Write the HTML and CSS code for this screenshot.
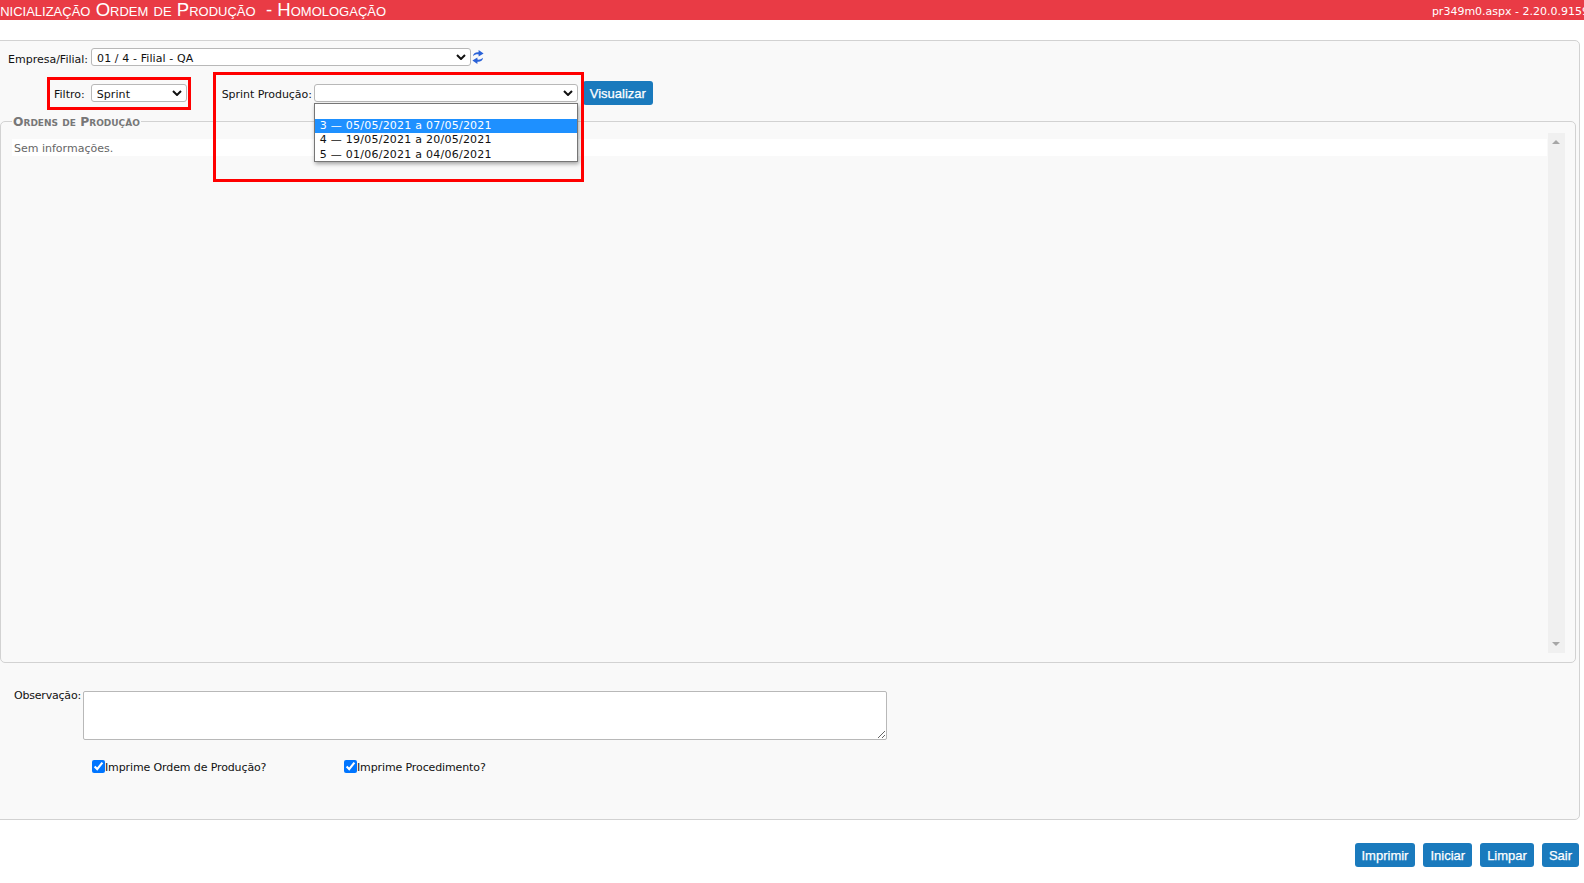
FILE: index.html
```html
<!DOCTYPE html>
<html lang="pt-BR">
<head>
    <meta charset="UTF-8">
    <title>Inicialização Ordem de Produção</title>
    <link rel="stylesheet" href="styles.css">
</head>
<body>
    <div class="top-bar">
        <span class="page-title">Inicialização Ordem de Produção &nbsp;- Homologação</span>
        <span class="page-version">pr349m0.aspx - 2.20.0.9159</span>
    </div>

    <div class="main-panel">
        <div class="row-company">
            <label class="field-label">Empresa/Filial:</label>
            <select class="select-company">
                <option>01 / 4 - Filial - QA</option>
            </select>
            <svg class="refresh-icon" viewBox="0 0 12 16" width="12" height="16">
                <path d="M1 7.2C1.2 4.4 3.4 3 6.6 3.2V1L11.6 4.4 6.6 7.6V5.4C4.4 5.2 2.6 5.6 1 7.2Z" fill="#2a62d8"/>
                <path d="M11 8.8C10.8 11.6 8.6 13 5.4 12.8V15L.4 11.6 5.4 8.4V10.6C7.6 10.8 9.4 10.4 11 8.8Z" fill="#2a62d8"/>
            </svg>
        </div>

        <div class="row-filter">
            <div class="filter-group">
                <label class="field-label">Filtro:</label>
                <select class="select-filter">
                    <option>Sprint</option>
                </select>
            </div>
            <div class="sprint-group">
                <label class="field-label">Sprint Produção:</label>
                <div class="sprint-wrap">
                    <select class="select-sprint">
                        <option></option>
                    </select>
                    <ul class="sprint-menu">
                        <li>&nbsp;</li>
                        <li class="active">3 — 05/05/2021 a 07/05/2021</li>
                        <li>4 — 19/05/2021 a 20/05/2021</li>
                        <li>5 — 01/06/2021 a 04/06/2021</li>
                    </ul>
                </div>
                <button class="btn btn-view">Visualizar</button>
            </div>
        </div>

        <div class="mark mark-filter"></div>
        <div class="mark mark-sprint"></div>

        <fieldset class="orders">
            <legend>Ordens de Produção</legend>
            <div class="orders-body">
                <div class="orders-list">
                    <div class="orders-empty">Sem informações.</div>
                </div>
                <div class="scroll-track">
                    <span class="arrow-up"></span>
                    <span class="arrow-down"></span>
                </div>
            </div>
        </fieldset>

        <div class="row-notes">
            <label class="field-label">Observação:</label>
            <textarea class="notes"></textarea>
        </div>

        <div class="row-checks">
            <label class="check check-first"><input type="checkbox" checked>Imprime Ordem de Produção?</label>
            <label class="check"><input type="checkbox" checked>Imprime Procedimento?</label>
        </div>
    </div>

    <div class="actions">
        <button class="btn">Imprimir</button>
        <button class="btn">Iniciar</button>
        <button class="btn">Limpar</button>
        <button class="btn">Sair</button>
    </div>
</body>
</html>
```

FILE: styles.css
```css
html, body {
    margin: 0;
    padding: 0;
    height: 883px;
    overflow: hidden;
    background-color: #fff;
    font-family: "DejaVu Sans", Verdana, sans-serif;
    font-size: 11px;
    color: #111;
}
.top-bar {
    height: 20px;
    background-color: #e93b45;
    color: #fff;
    display: flex;
    justify-content: space-between;
    align-items: center;
    overflow: hidden;
    white-space: nowrap;
}
.page-title {
    font-family: "Liberation Sans", Arial, sans-serif;
    font-variant: small-caps;
    font-size: 18.6px;
    margin: -1px 0 0 -5px;
}
.page-version {
    margin: 3px -5px 0 0;
    font-size: 11px;
}
.main-panel {
    position: relative;
    box-sizing: border-box;
    height: 780px;
    margin: 20px 4px 0 -1px;
    background-color: #f9f9f9;
    border: 1px solid #d2d2d2;
    border-radius: 0 5px 5px 0;
}
.field-label {
    white-space: nowrap;
    padding-top: 2px;
}
select {
    box-sizing: border-box;
    height: 18px;
    padding: 2px 0 0 5px;
    appearance: none;
    background: #fff url("data:image/svg+xml,%3Csvg xmlns='http://www.w3.org/2000/svg' width='10' height='6'%3E%3Cpath d='M1 1l4 4 4-4' fill='none' stroke='%23111' stroke-width='2'/%3E%3C/svg%3E") no-repeat right 4px center;
    border: 1px solid #b8b8b8;
    border-radius: 3px;
    font-family: "DejaVu Sans", Verdana, sans-serif;
    font-size: 11px;
    letter-spacing: 0.1px;
    color: #111;
}
.row-company {
    display: flex;
    align-items: center;
    height: 18px;
    margin: 7px 0 0 8px;
}
.row-company .field-label {
    margin-right: 3px;
    padding-top: 4px;
}
.select-company {
    width: 380px;
}
.refresh-icon {
    margin-left: 1px;
}
.row-filter {
    display: flex;
    align-items: center;
    height: 24px;
    margin-top: 15px;
}
.filter-group {
    display: flex;
    align-items: center;
    margin-left: 54px;
}
.filter-group .field-label {
    margin-right: 6px;
}
.select-filter {
    width: 96px;
}
.sprint-group {
    display: flex;
    align-items: center;
    margin-left: 35px;
}
.sprint-group .field-label {
    margin-right: 2px;
    letter-spacing: -0.05px;
}
.sprint-wrap {
    position: relative;
    height: 18px;
}
.select-sprint {
    display: block;
    width: 264px;
}
.sprint-menu {
    position: absolute;
    top: 19px;
    left: 0;
    z-index: 5;
    box-sizing: border-box;
    width: 264px;
    height: 59px;
    margin: 0;
    padding: 1px 0 0;
    list-style: none;
    background-color: #fff;
    border: 1px solid #767676;
    box-shadow: 1px 2px 4px rgba(0, 0, 0, 0.35);
}
.sprint-menu li {
    height: 14.2px;
    line-height: 14px;
    padding-left: 5px;
    letter-spacing: 0.24px;
    white-space: nowrap;
}
.sprint-menu li.active {
    background-color: #1e90ff;
    color: #fff;
}
.btn {
    height: 24px;
    padding: 0 7px;
    background-color: #1a7abd;
    border: none;
    border-radius: 3px;
    font-family: "Liberation Sans", Arial, sans-serif;
    font-size: 13px;
    -webkit-text-stroke: 0.25px #fff;
    color: #fff;
}
.btn-view {
    margin-left: 5px;
    width: 70px;
    padding: 0;
}
.mark {
    position: absolute;
    z-index: 6;
    box-sizing: border-box;
    border: 3px solid #f00;
}
.mark-filter {
    top: 36px;
    left: 47px;
    width: 144px;
    height: 33px;
}
.mark-sprint {
    top: 31px;
    left: 213px;
    width: 371px;
    height: 110px;
}
.orders {
    box-sizing: border-box;
    height: 549px;
    margin: 9px 3px 0 0;
    padding: 0;
    border: 1px solid #d2d2d2;
    border-radius: 5px;
    min-width: 0;
}
.orders legend {
    margin-left: 11px;
    padding: 1px 1px 0;
    font-family: "DejaVu Sans", Verdana, sans-serif;
    font-variant: small-caps;
    font-weight: bold;
    font-size: 12.3px;
    color: #777;
}
.orders-body {
    display: flex;
    height: 520px;
    margin-top: 4px;
}
.orders-list {
    flex: 1;
    margin: 6px 1px 0 11px;
}
.orders-empty {
    height: 17px;
    line-height: 19px;
    padding-left: 2px;
    background-color: #fff;
    color: #666;
}
.scroll-track {
    position: relative;
    width: 17px;
    margin-right: 10px;
    background-color: #f0f0f0;
}
.arrow-up, .arrow-down {
    position: absolute;
    left: 4px;
    border-left: 4px solid transparent;
    border-right: 4px solid transparent;
}
.arrow-up {
    top: 7px;
    border-bottom: 4px solid #a6a6a6;
}
.arrow-down {
    bottom: 7px;
    border-top: 4px solid #a6a6a6;
}
.row-notes {
    display: flex;
    align-items: flex-start;
    margin: 28px 0 0 14px;
}
.row-notes .field-label {
    width: 69px;
    margin-top: -2px;
    padding-top: 0;
    letter-spacing: -0.2px;
}
.notes {
    box-sizing: border-box;
    display: block;
    width: 804px;
    height: 49px;
    margin: 0;
    background-color: #fff;
    border: 1px solid #b8b8b8;
    border-radius: 2px;
}
.row-checks {
    display: flex;
    margin: 20px 0 0 92px;
}
.check {
    display: flex;
    align-items: center;
    height: 15px;
    letter-spacing: -0.12px;
}
.check-first {
    width: 252px;
}
.check input {
    width: 13px;
    height: 13px;
    margin: -2px 0 0;
}
.actions {
    display: flex;
    justify-content: flex-end;
    gap: 8px;
    margin: 23px 5px 0 0;
}
```
